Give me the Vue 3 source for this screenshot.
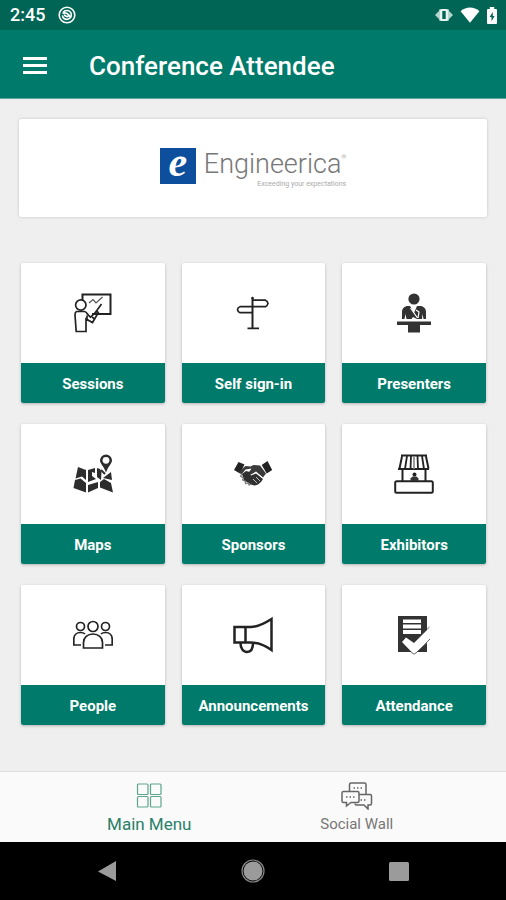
<template>
  <div class="app">
    <div class="statusbar">
      <span class="clock">2:45</span>
      <svg class="status-app" viewBox="0 0 18 18" fill="none" stroke="currentColor">
        <circle cx="9" cy="9" r="7.8" stroke-width="1.6" />
        <path d="M5 6.400C7 3.600 11.600 4 13 7c1 2.600-.3 5.600-3.200 6.200C7 13.800 4.600 12 4.500 9.400" stroke-width="1.600" />
        <path d="M4.500 7.600c2.500-1.200 4.500-.4 5.800 1 .8 1 .2 2-.8 2-1.400 0-2-1.200-3.500-1.400M10 8l3 3.500" stroke-width="1.700" />
      </svg>
      <div class="status-icons">
        <svg class="vibrate" viewBox="0 0 20 14">
          <path d="M5 1.500h10v11H5zM1 7l4-4v8zM19 7l-4-4v8z" fill="#b6d5cf" />
          <rect x="6" y="1" width="8" height="12" rx="1.500" fill="#e8f3f1" />
          <rect x="8.300" y="3" width="3.400" height="8" fill="#006555" />
        </svg>
        <svg class="wifi" viewBox="0 0 20 16">
          <path d="M.6 4.200C6-.6 14-.6 19.400 4.200L10 15.800z" fill="currentColor" />
        </svg>
        <svg class="battery" viewBox="0 0 12 17">
          <path d="M3.800 0h4.400v2H10a1 1 0 0 1 1 1v13a1 1 0 0 1-1 1H2a1 1 0 0 1-1-1V3a1 1 0 0 1 1-1h1.800z" fill="currentColor" />
          <path d="M6.800 5 3.600 10h1.900v4.200L8.600 9H6.800z" fill="#006555" />
        </svg>
      </div>
    </div>

    <header class="toolbar">
      <button class="menu-btn" type="button" aria-label="Menu">
        <svg viewBox="0 0 24 18" fill="currentColor">
          <path d="M0 0h24v3H0zM0 7h24v3H0zM0 14h24v3H0z" />
        </svg>
      </button>
      <h1>Conference Attendee</h1>
    </header>

    <main class="content">
      <section class="banner">
        <div class="mark">
          <span>e</span>
        </div>
        <div class="brand">
          <p class="brand-name">Engineerica<sup>®</sup></p>
          <p class="brand-line">Exceeding your expectations</p>
        </div>
      </section>

      <div class="grid">
        <button v-for="item in items" :key="item.icon" class="tile" type="button">
          <span class="tile-body">
            <svg viewBox="0 0 40 40" fill="none" stroke="#222" stroke-width="1.700">
              <g v-if="item.icon === 'sessions'">
                <path d="M9.500 7V1.400h28V21H19" stroke-width="2" />
                <circle cx="7.800" cy="12" r="5.200" />
                <path d="M3.500 18.500h8c1.800 0 2.500 2 4 4l2 1.700 6.500-6 1.300 1.500-5.800 9.800-6.500-3.500v12.500H3.200L2 22c0-2 .4-3 1.500-3.500z" />
                <path d="M14 26v-3.500M19 24l2 1.500M22 20l6.500-9" />
                <path d="m16 10 4-3.500L23 10l6.500-6" stroke="#555" stroke-width="1.200" />
              </g>
              <g v-else-if="item.icon === 'signin'">
                <path d="M19.500 35V5" stroke-width="2" />
                <path d="M14.500 35.300h11.500" stroke-width="1.800" />
                <path d="M20 7.200h12.500q2 .8 2.500 3.200-.5 2.400-2.500 3.300H7q-2.200.7-2.500 2.900.3 2.300 2.500 3.100h12.500" />
                <circle cx="19.500" cy="5" r="1.300" fill="#222" stroke="none" />
              </g>
              <g v-else-if="item.icon === 'presenters'" fill="#333" stroke="none">
                <circle cx="20" cy="6" r="5.600" />
                <path d="M8 26v-7c0-3.500 2.500-6 6-6h2l4 7 3-7h3c3.500 0 6 2.500 6 6v7h-2.500l-1-5-.5 5h-5l-4-2-1.500 2h-5l-1-5-1 5z" />
                <path d="m16.500 15 7 10M22 17l3 2-1 6" stroke="#fff" stroke-width="1.200" fill="none" />
                <path d="M3 28.500h34V32H26v7.500H14V32H3z" />
              </g>
              <g v-else-if="item.icon === 'maps'" fill="#2d2d2d" stroke="none">
                <path d="m5 13 8 3v10l-4-3.500-6.500 2zM2 26l5.500-1.500L13 29v9.500L.5 34zM15 16l7-2v5l-3-1v4l4 3-8 3zM24 14l3 1 1.500 3-.5 8-4-3zM15 31l10-3v6l-10 4.500zM27 28l4-3 7 4 2 9.500-13-5zM30 24l8-6 1 8z" />
                <path d="m28 16 4 4" stroke="#2d2d2d" stroke-width="2" />
                <path d="M33 .5a6 6 0 0 1 6 6c0 3-4 6-6 12-2-6-6-9-6-12a6 6 0 0 1 6-6z" />
                <circle cx="33" cy="6.300" r="3.400" fill="#fff" />
              </g>
              <g v-else-if="item.icon === 'sponsors'" stroke="none">
                <path d="m5.500 8 6 2.500-4.500 9-6-3.500zM34.500 7l4.700 9-5.500 3.500-5-8.500z" fill="#222" />
                <path d="m12.500 12 5 .5 3-1.500 6.500.500 6 8-3 4-7-6-4 2.500c-2 1-4-.5-2.500-2.500l2-3-6 1-4 5-3-2.500z" fill="#3a3a3a" />
                <path d="m9 20 4-3 4 1 1 3.500 5-2 7 5.500-2 3-3 2.500-3 1-3-.5-8-4.500z" fill="#303030" />
                <path d="m9.500 19-2 3 3 2-1 2 2.500 1 .5 2.500 3-.5.500 2 3-1" stroke="#777" stroke-width="1.200" />
                <path d="m20 25 4 4m-1-6 4 4m-1-6 4 3" stroke="#fff" stroke-width=".7" />
              </g>
              <g v-else-if="item.icon === 'exhibitors'">
                <path d="M7 1.500h26M8 2.500 5.500 14.500M32 2.500l2.500 12M4 15h31M8.500 16v11M31.500 16v11" stroke-width="2" />
                <path d="m13 2-2 13m6-13-.5 13M23.500 2l.5 13M28 2l2 13" stroke-width="1.800" />
                <path d="M20 2v13" stroke="#888" />
                <rect x="1.200" y="27.200" width="37.600" height="11.500" rx="1.500" stroke-width="2" />
                <circle cx="20.500" cy="20.500" r="2" fill="#222" stroke="none" />
                <path d="M16.500 27v-2.500l2-2h4l2 2V27z" fill="#333" stroke="none" />
              </g>
              <g v-else-if="item.icon === 'people'">
                <circle cx="20" cy="11.500" r="5" />
                <circle cx="7.500" cy="11.500" r="4" />
                <circle cx="32.500" cy="11.500" r="4" />
                <path d="M10.500 33v-5.500c0-5 4-8.500 9.500-8.500s9.500 3.500 9.500 8.500V33zM8 30H.8v-6c0-4 2.700-6.500 6.700-6.500 2 0 3.500.5 4.500 1.500M32 30h7.200v-6c0-4-2.700-6.500-6.700-6.500-2 0-3.500.5-4.500 1.500" />
              </g>
              <g v-else-if="item.icon === 'announcements'" stroke-width="2.500">
                <path d="M1.500 12h16c7 0 14-3.500 21-8v31c-6-4.500-13-7.500-21-7.500h-16zM12.500 12v15.500M7.500 28c0 5 2.500 9 6.500 9s6-3 6-9" />
              </g>
              <g v-else fill="#333" stroke="none">
                <path d="M4 1h29v36H4z" />
                <path d="M9 4.500h18V8H9zM9 9.500h18v4H9zM9 15h18v4H9z" fill="#fff" />
                <path d="m8 27 4-4.500 8 5.500L36 12v13L20 39.500z" fill="#fff" />
                <path d="m15 35.500 5 3.700 3-2L36 24M28 19l7.500-7" stroke="#444" stroke-width=".8" fill="none" />
              </g>
            </svg>
          </span>
          <span class="tile-label">{{ item.label }}</span>
        </button>
      </div>
    </main>

    <nav class="tabs">
      <a class="tab tab_active" href="#menu">
        <svg class="tab-icon" viewBox="0 0 26 26" fill="none" stroke="#5da58d" stroke-width="1.200">
          <rect x="1.500" y="1" width="10.500" height="10.500" rx="1" />
          <rect x="14.500" y="1" width="10.500" height="10.500" rx="1" />
          <rect x="1.500" y="13.500" width="10.500" height="10.500" rx="1" />
          <rect x="14.500" y="13.500" width="10.500" height="10.500" rx="1" />
        </svg>
        <span>Main Menu</span>
      </a>
      <a class="tab" href="#social">
        <svg class="tab-icon tab-icon_wide" viewBox="0 0 32 28" fill="none" stroke="#666" stroke-width="1.500">
          <path d="M8.500 9V2.500q0-1.500 1.500-1.500h13.500q1.500 0 1.500 1.500v9.500" />
          <path d="M2.500 9.500h14q1.500 0 1.500 1.500v8q0 1.500-1.500 1.500H10L5.500 24v-3.500h-3Q1 20.500 1 19v-8q0-1.500 1.500-1.500z" />
          <path d="M18 12.500h11q1.500 0 1.500 1.500v7.500q0 1.500-1.500 1.500h-2v4l-4-4h-7.500q-1.500 0-1.500-1.500" />
          <path d="M12.500 6h10M5 15h10M19.500 18h7" stroke-dasharray="1.500 2" />
        </svg>
        <span>Social Wall</span>
      </a>
    </nav>

    <div class="navbar">
      <button type="button" aria-label="Back">
        <svg viewBox="0 0 24 24"><path d="M21 2v20L3 12.500z" fill="#9b9b9b" /></svg>
      </button>
      <button type="button" aria-label="Home">
        <svg viewBox="0 0 24 24">
          <circle cx="12" cy="12" r="11" fill="none" stroke="#888" stroke-width="1.200" />
          <circle cx="12" cy="12" r="9.500" fill="#9b9b9b" />
        </svg>
      </button>
      <button type="button" aria-label="Recent apps">
        <svg viewBox="0 0 24 24"><rect x="2" y="3" width="20" height="19" rx="1.500" fill="#9b9b9b" /></svg>
      </button>
    </div>
  </div>
</template>

<script setup>
const items = [
  { icon: 'sessions', label: 'Sessions' },
  { icon: 'signin', label: 'Self sign-in' },
  { icon: 'presenters', label: 'Presenters' },
  { icon: 'maps', label: 'Maps' },
  { icon: 'sponsors', label: 'Sponsors' },
  { icon: 'exhibitors', label: 'Exhibitors' },
  { icon: 'people', label: 'People' },
  { icon: 'announcements', label: 'Announcements' },
  { icon: 'attendance', label: 'Attendance' }
]
</script>

<style>
body {
  margin: 0;
  background: #efefef;
}
</style>

<style scoped>
.app {
  display: flex;
  flex-direction: column;
  min-height: 100vh;
  font-family: Roboto, "Liberation Sans", sans-serif;
  background: #efefef;
}

button {
  padding: 0;
  border: 0;
  background: none;
  color: inherit;
  font: inherit;
  cursor: pointer;
}

svg {
  display: block;
}

.statusbar {
  display: flex;
  align-items: center;
  height: 30px;
  padding: 0 8px 0 10px;
  color: #fff;
  background: #006555;
}

.clock {
  font-size: 18px;
  font-weight: 500;
  line-height: 30px;
}

.status-app {
  width: 18px;
  height: 18px;
  margin-left: 13px;
}

.status-icons {
  display: flex;
  align-items: center;
  gap: 6px;
  margin-left: auto;
}

.vibrate {
  width: 20px;
  height: 14px;
}

.wifi {
  width: 20px;
  height: 16px;
}

.battery {
  width: 12px;
  height: 17px;
}

.toolbar {
  display: flex;
  align-items: center;
  box-sizing: border-box;
  height: 69px;
  padding: 3px 23px 0;
  color: #fff;
  background: #007a6a;
  border-bottom: 1px solid #5fa398;
}

.menu-btn svg {
  width: 24px;
  height: 18px;
}

.toolbar h1 {
  margin: 0 0 0 42px;
  font-size: 26px;
  font-weight: 500;
  line-height: 32px;
}

.content {
  flex: 1;
  padding-top: 20px;
}

.banner {
  display: flex;
  justify-content: center;
  align-items: center;
  gap: 8px;
  height: 98px;
  margin: 0 19px;
  background: #fff;
  border-radius: 2px;
  box-shadow: 0 0 3px rgba(0, 0, 0, 0.2);
}

.mark {
  display: flex;
  justify-content: center;
  align-items: center;
  width: 36px;
  height: 36px;
  margin-bottom: 4px;
  color: #fff;
  background: #0d4f9c;
}

.mark span {
  height: 44px;
  font-family: "Liberation Serif", serif;
  font-size: 42px;
  font-style: italic;
  font-weight: bold;
  line-height: 36px;
}

.brand p {
  margin: 0;
}

.brand-name {
  color: #777;
  font-size: 27px;
  font-weight: 300;
  line-height: 32px;
}

.brand-name sup {
  font-size: 6px;
  line-height: 6px;
  vertical-align: 14px;
}

.brand-line {
  color: #aaa;
  font-size: 7px;
  line-height: 8px;
  text-align: right;
}

.grid {
  display: grid;
  grid-template-columns: repeat(3, 1fr);
  gap: 21px 17px;
  padding: 46px 20px 46px 21px;
}

.tile {
  display: flex;
  flex-direction: column;
  height: 140px;
  background: #fff;
  border-radius: 2px;
  box-shadow: 0 1px 3px rgba(0, 0, 0, 0.25);
  overflow: hidden;
}

.tile-body {
  display: flex;
  flex: 1;
  justify-content: center;
  align-items: center;
  width: 100%;
}

.tile-body svg {
  width: 40px;
  height: 40px;
}

.tile-label {
  width: 100%;
  padding-top: 2px;
  color: #fff;
  font-size: 15px;
  font-weight: 700;
  line-height: 38px;
  background: #007a6a;
}

.tabs {
  display: flex;
  justify-content: center;
  height: 70px;
  background: #fafafa;
  border-top: 1px solid #dedede;
}

.tab {
  display: flex;
  flex-direction: column;
  align-items: center;
  width: 41%;
  padding-top: 10px;
  color: #777;
  font-size: 15px;
  line-height: 28px;
  text-decoration: none;
}

.tab_active {
  color: #2a8068;
  font-size: 17px;
}

.tab-icon {
  width: 26px;
  height: 28px;
}

.tab-icon_wide {
  width: 32px;
}

.navbar {
  display: flex;
  justify-content: center;
  align-items: center;
  gap: 122px;
  height: 58px;
  background: #000;
}

.navbar svg {
  width: 24px;
  height: 24px;
}
</style>
